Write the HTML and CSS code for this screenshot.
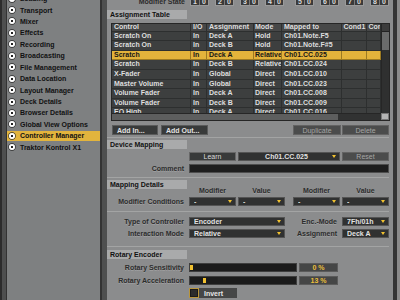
FILE: index.html
```html
<!DOCTYPE html>
<html>
<head>
<meta charset="utf-8">
<title>Controller Manager</title>
<link rel="stylesheet" href="styles.css">
</head>
<body>
<div class="app">
  <aside class="side">
    <div class="panel">
      <ul class="nav">
        <li><span class="bul"></span>Loading</li>
        <li><span class="bul"></span>Transport</li>
        <li><span class="bul"></span>Mixer</li>
        <li><span class="bul"></span>Effects</li>
        <li><span class="bul"></span>Recording</li>
        <li><span class="bul"></span>Broadcasting</li>
        <li><span class="bul"></span>File Management</li>
        <li><span class="bul"></span>Data Location</li>
        <li><span class="bul"></span>Layout Manager</li>
        <li><span class="bul"></span>Deck Details</li>
        <li><span class="bul"></span>Browser Details</li>
        <li><span class="bul"></span>Global View Options</li>
        <li class="on"><span class="bul"></span>Controller Manager</li>
        <li><span class="bul"></span>Traktor Kontrol X1</li>
      </ul>
    </div>
  </aside>

  <main class="main">
    <div class="modstate">
      <span class="ms-label">Modifier State</span>
      <div class="ms-grp">
        <span class="ms"><i>1</i><i>0</i></span>
        <span class="ms"><i>2</i><i>0</i></span>
        <span class="ms"><i>3</i><i>0</i></span>
        <span class="ms"><i>4</i><i>0</i></span>
      </div>
      <div class="ms-grp">
        <span class="ms"><i>5</i><i>0</i></span>
        <span class="ms"><i>6</i><i>0</i></span>
        <span class="ms"><i>7</i><i>0</i></span>
        <span class="ms"><i>8</i><i>0</i></span>
      </div>
    </div>

    <div class="sech"><span>Assignment Table</span></div>

    <div class="tbl">
      <div class="view">
        <div class="tr th"><span>Control</span><span>I/O</span><span>Assignment</span><span>Mode</span><span>Mapped to</span><span>Cond1</span><span>Con</span></div>
        <div class="tr"><span>Scratch On</span><span>In</span><span>Deck A</span><span>Hold</span><span>Ch01.Note.F5</span><span></span><span></span></div>
        <div class="tr"><span>Scratch On</span><span>In</span><span>Deck B</span><span>Hold</span><span>Ch01.Note.F#5</span><span></span><span></span></div>
        <div class="tr sel"><span>Scratch</span><span>In</span><span>Deck A</span><span>Relative</span><span>Ch01.CC.025</span><span></span><span></span></div>
        <div class="tr"><span>Scratch</span><span>In</span><span>Deck B</span><span>Relative</span><span>Ch01.CC.024</span><span></span><span></span></div>
        <div class="tr"><span>X-Fader</span><span>In</span><span>Global</span><span>Direct</span><span>Ch01.CC.010</span><span></span><span></span></div>
        <div class="tr"><span>Master Volume</span><span>In</span><span>Global</span><span>Direct</span><span>Ch01.CC.023</span><span></span><span></span></div>
        <div class="tr"><span>Volume Fader</span><span>In</span><span>Deck A</span><span>Direct</span><span>Ch01.CC.008</span><span></span><span></span></div>
        <div class="tr"><span>Volume Fader</span><span>In</span><span>Deck B</span><span>Direct</span><span>Ch01.CC.009</span><span></span><span></span></div>
        <div class="tr"><span>EQ High</span><span>In</span><span>Deck A</span><span>Direct</span><span>Ch01.CC.016</span><span></span><span></span></div>
      </div>
      <div class="vs"><div class="cap"></div><div class="thumb"></div></div>
      <div class="hs"><div class="thumb"></div></div>
      <div class="corner"></div>
    </div>

    <div class="btns">
      <div class="grp">
        <span class="btn l add-in">Add In...</span>
        <span class="btn l add-out">Add Out...</span>
      </div>
      <div class="grp tight">
        <span class="btn dis dup">Duplicate</span>
        <span class="btn dis del">Delete</span>
      </div>
    </div>

    <div class="sep"></div>
    <div class="sech"><span>Device Mapping</span></div>

    <div class="frow r-learn">
      <span></span>
      <span class="btn learn">Learn</span>
      <span class="dd mid"><b>Ch01.CC.025</b></span>
      <span class="btn dis reset">Reset</span>
    </div>
    <div class="frow r-comment">
      <span class="lbl">Comment</span>
      <span class="fld"></span>
    </div>

    <div class="sep s2"></div>
    <div class="sech"><span>Mapping Details</span></div>

    <div class="frow hd">
      <span></span>
      <span class="cl">Modifier</span>
      <span class="cl">Value</span>
      <span class="cl">Modifier</span>
      <span class="cl">Value</span>
    </div>
    <div class="frow r-mod">
      <span class="lbl">Modifier Conditions</span>
      <span class="dd"><b>-</b></span>
      <span class="dd"><b>-</b></span>
      <span class="dd"><b>-</b></span>
      <span class="dd"><b>-</b></span>
    </div>

    <div class="sep s3"></div>

    <div class="frow r-type">
      <span class="lbl">Type of Controller</span>
      <span class="dd w2"><b>Encoder</b></span>
      <span class="lbl">Enc.-Mode</span>
      <span class="dd"><b>7Fh/01h</b></span>
    </div>
    <div class="frow r-int">
      <span class="lbl">Interaction Mode</span>
      <span class="dd w2"><b>Relative</b></span>
      <span class="lbl">Assignment</span>
      <span class="dd"><b>Deck A</b></span>
    </div>

    <div class="sep s4"></div>
    <div class="sech s-rot"><span>Rotary Encoder</span></div>

    <div class="frow r-sens">
      <span class="lbl">Rotary Sensitivity</span>
      <div class="slide">
        <div class="track"><span class="knob" style="margin-left:0px"></span></div>
        <span class="val">0 %</span>
      </div>
    </div>
    <div class="frow r-acc">
      <span class="lbl">Rotary Acceleration</span>
      <div class="slide">
        <div class="track"><span class="knob" style="margin-left:13px"></span></div>
        <span class="val">13 %</span>
      </div>
    </div>
    <div class="frow r-inv">
      <span></span>
      <div class="chk"><span class="box"></span><span class="chklbl">Invert</span></div>
    </div>
  </main>

  <div class="rch"></div>
</div>
</body>
</html>
```

FILE: styles.css
```css
* { box-sizing: border-box; margin: 0; padding: 0; }
html, body { width: 400px; height: 300px; overflow: hidden; }
body {
  font-family: "Liberation Sans", Arial, sans-serif;
  font-weight: bold;
  font-size: 7px;
  line-height: 1;
  background: #3a3a3a;
  color: #111;
}
ul { list-style: none; }
b { font-weight: bold; }

.app { display: flex; height: 300px; }

/* ---------- sidebar ---------- */
.side {
  flex: none;
  width: 107px;
  display: flex;
  background: #4e4f4f;
  border-left: 2px solid #2c2c2c;
  padding: 0 5px 0 4px;
}
.panel {
  flex: 1;
  background: #7e8081;
  border-left: 1px solid #333;
  border-right: 2px solid #333;
  overflow: hidden;
}
.nav {
  display: flex;
  flex-direction: column;
  gap: 1.45px;
  margin-top: -6.4px;
}
.nav li {
  height: 10px;
  display: flex;
  align-items: center;
  gap: 5px;
  padding-left: 2px;
  white-space: nowrap;
  color: #111;
}
.nav li.on { background: #e2b43d; }
.bul {
  flex: none;
  width: 6px;
  height: 6px;
  border-radius: 50%;
  background: radial-gradient(circle, #222 0 1px, #fff 1.3px);
  box-shadow: 0 0 0 0.7px #2a2a2a;
}

/* ---------- main ---------- */
.main {
  flex: none;
  width: 286px;
  background: #8b8c8d;
  display: flex;
  flex-direction: column;
  padding-right: 4px;
  overflow: hidden;
}
.rch {
  flex: none;
  width: 7px;
  background: #8a8a8a;
  border-left: 4px solid #343434;
}

.modstate {
  flex: none;
  height: 9px;
  margin-top: -3px;
  display: flex;
  align-items: center;
  justify-content: flex-end;
  gap: 5px;
}
.ms-label { color: #2b2b2b; }
.ms-grp { display: flex; gap: 6px; }
.ms-grp + .ms-grp { margin-left: 6px; }
.ms {
  width: 19px;
  height: 9px;
  display: flex;
  background: #3a3a3a;
  border: 1px solid #9a9a9a;
  color: #dcdcdc;
}
.ms i {
  font-style: normal;
  flex: 1;
  display: flex;
  align-items: center;
  justify-content: center;
}
.ms i + i { border-left: 1px solid #7a7a7a; }

.sech { flex: none; height: 9px; margin-top: 4px; display: flex; }
.sech span {
  width: 80px;
  background: #a9aaab;
  padding-left: 3px;
  line-height: 9px;
  color: #111;
}

/* ---------- table ---------- */
.tbl {
  flex: none;
  margin: 4px 0 0 4px;
  width: 279px;
  height: 98px;
  border: 1px solid #262626;
  background: #3d3f3f;
  display: grid;
  grid-template-columns: 1fr 8px;
  grid-template-rows: 1fr 7px;
}
.view { overflow: hidden; }
.tr {
  display: grid;
  grid-template-columns: 79px 16px 47px 28px 59.5px 25px 14.5px;
  height: 9.6px;
  border-bottom: 1px solid #2d2f2f;
  color: #dedede;
}
.tr span {
  padding-left: 2px;
  border-right: 1px solid #2d2f2f;
  white-space: nowrap;
  overflow: hidden;
  line-height: 8.6px;
}
.tr span:nth-child(4) { padding-left: 1px; }
.tr.th { height: 7.6px; background: #474848; }
.tr.th span { line-height: 6.6px; }
.tr.sel { background: #e3b33b; color: #161616; border-bottom-color: #9c7a22; }
.tr.sel span { border-right-color: #9c7a22; }
.vs {
  background: #2f3030;
  border-left: 1px solid #262626;
  display: flex;
  flex-direction: column;
}
.vs .cap { height: 8px; background: #3c3c3c; border-bottom: 1px solid #222; }
.vs .thumb { height: 18px; background: #6a6b6b; }
.hs {
  background: #313232;
  border-top: 1px solid #262626;
  display: flex;
}
.hs .thumb { width: 226px; background: #5d5e5e; }
.corner { background: #b4b4b4; border: 1px solid #777; }

/* ---------- buttons ---------- */
.btns {
  flex: none;
  display: flex;
  justify-content: space-between;
  height: 10px;
  margin: 4px 0 0 5px;
}
.grp { display: flex; gap: 3px; }
.grp.tight { gap: 1px; }
.btn {
  display: flex;
  align-items: center;
  justify-content: center;
  background: #383a3a;
  border: 1px solid #5a5b5b;
  color: #e2e2e2;
  white-space: nowrap;
}
.btn.l { justify-content: flex-start; padding-left: 4px; }
.btn.dis {
  background: #4b4c4c;
  border-color: #636363;
  color: #a6a6a6;
  font-weight: normal;
}
.add-in { width: 46px; }
.add-out { width: 47px; }
.dup { width: 48px; }
.del { width: 47px; }
.learn { width: 47px; font-weight: normal; color: #dadada; border-color: #676767; }
.reset { width: 47px; }

.sep { flex: none; height: 1px; background: #a3a4a4; margin-top: 2px; }
.sep + .sech { margin-top: 2px; }
.sep.s2 { margin-top: 4px; }
.sep.s3 { margin-top: 5px; }
.sep.s4 { margin-top: 8px; }
.sech.s-rot { margin-top: 3px; }

/* ---------- form ---------- */
.frow {
  flex: none;
  display: grid;
  grid-template-columns: 82px 49px 55px 49px 47px;
  height: 9px;
  margin-top: 3px;
}
.lbl {
  display: flex;
  align-items: center;
  justify-content: flex-end;
  padding-right: 5px;
  white-space: nowrap;
  color: #2c2c2c;
  text-shadow: 0 1px 0 rgba(255,255,255,0.18);
}
.dd {
  width: 47px;
  display: flex;
  align-items: center;
  background: #303131;
  border: 1px solid #545454;
  color: #e2e2e2;
  padding-left: 4px;
  white-space: nowrap;
}
.dd b { flex: 1; overflow: hidden; }
.dd::after {
  content: "";
  flex: none;
  margin: 0 3px 0 2px;
  border-left: 2px solid transparent;
  border-right: 2px solid transparent;
  border-top: 3px solid #f2c230;
}
.dd.w2 { grid-column: span 2; width: 96px; }
.dd.mid { grid-column: 3 / 5; width: 102px; }
.dd.mid b { text-align: center; }
.fld {
  grid-column: 2 / 6;
  background: #1e1e1e;
  border: 1px solid #4e4e4e;
}
.frow.hd { height: 5px; margin-top: -1px; }
.cl {
  width: 47px;
  text-align: center;
  line-height: 5px;
  color: #2c2c2c;
  text-shadow: 0 1px 0 rgba(255,255,255,0.18);
}
.r-mod { margin-top: 4px; }
.r-type { margin-top: 5px; }
.r-sens { margin-top: 4px; }
.r-acc { margin-top: 4px; }
.r-inv { height: 10px; }

.slide { grid-column: 2 / 6; display: flex; gap: 2px; }
.track {
  width: 108px;
  background: #1b1b1b;
  border: 1px solid #3e3e3e;
  padding: 1px 0;
  display: flex;
}
.knob { width: 3px; background: #f0c030; }
.val {
  width: 39px;
  display: flex;
  align-items: center;
  justify-content: center;
  background: #454646;
  border: 1px solid #5b5b5b;
  color: #eabf3a;
}

.chk { grid-column: 2 / 4; display: flex; }
.box {
  width: 10px;
  background: #2c2c2c;
  border: 1px solid #b8953b;
  box-shadow: inset 0 0 0 1px #1a1a1a;
}
.chklbl {
  width: 38px;
  display: flex;
  align-items: center;
  padding-left: 5px;
  background: #464747;
  color: #e6e6e6;
}
```
